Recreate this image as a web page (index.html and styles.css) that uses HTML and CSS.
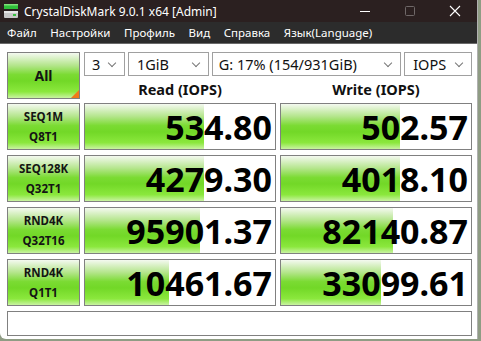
FILE: index.html
```html
<!DOCTYPE html>
<html lang="ru">
<head>
    <meta charset="UTF-8">
    <title>CrystalDiskMark 9.0.1 x64 [Admin]</title>
    <link rel="stylesheet" href="styles.css">
</head>
<body>
    <div class="window">
        <div class="titlebar">
            <svg class="app-icon" width="16" height="16" viewBox="0 0 16 16">
                <rect x="1" y="1" width="14" height="5" fill="#2fbf3a"/>
                <rect x="1" y="1" width="14" height="1.5" fill="#7fe07a"/>
                <rect x="1" y="8" width="14" height="7" rx="1" fill="#c8c8c8"/>
                <rect x="1" y="8" width="14" height="2" fill="#e6e6e6"/>
                <rect x="10" y="11" width="3" height="2" fill="#38c040"/>
            </svg>
            <span class="title">CrystalDiskMark 9.0.1 x64 [Admin]</span>
            <div class="controls">
                <span class="ctl"><svg width="12" height="12" viewBox="0 0 12 12"><path d="M1 6.5h10" stroke="#fff" stroke-width="1"/></svg></span>
                <span class="ctl"><svg width="12" height="12" viewBox="0 0 12 12"><rect x="1.5" y="1.5" width="9" height="9" rx="1" fill="none" stroke="#6f6868" stroke-width="1"/></svg></span>
                <span class="ctl"><svg width="12" height="12" viewBox="0 0 12 12"><path d="M1 1L11 11M11 1L1 11" stroke="#fff" stroke-width="1.1"/></svg></span>
            </div>
        </div>
        <div class="menubar">
            <span>Файл</span>
            <span>Настройки</span>
            <span>Профиль</span>
            <span>Вид</span>
            <span>Справка</span>
            <span>Язык(Language)</span>
        </div>
        <div class="content">
            <div class="grid">
                <div class="btn all">All<span class="corner"></span></div>
                <div class="top">
                    <div class="selects">
                        <div class="select s-count">3<span class="chev"></span></div>
                        <div class="select s-size">1GiB<span class="chev"></span></div>
                        <div class="select s-drive">G: 17% (154/931GiB)<span class="chev"></span></div>
                        <div class="select s-unit">IOPS<span class="chev"></span></div>
                    </div>
                    <div class="heads">
                        <div class="head">Read (IOPS)</div>
                        <div class="head">Write (IOPS)</div>
                    </div>
                </div>

                <div class="btn label">SEQ1M<br>Q8T1</div>
                <div class="value"><div class="bar" style="width: 119px"></div><span>534.80</span></div>
                <div class="value"><div class="bar" style="width: 119px"></div><span>502.57</span></div>

                <div class="btn label">SEQ128K<br>Q32T1</div>
                <div class="value"><div class="bar" style="width: 119px"></div><span>4279.30</span></div>
                <div class="value"><div class="bar" style="width: 119px"></div><span>4018.10</span></div>

                <div class="btn label">RND4K<br>Q32T16</div>
                <div class="value"><div class="bar" style="width: 115px"></div><span>95901.37</span></div>
                <div class="value"><div class="bar" style="width: 112px"></div><span>82140.87</span></div>

                <div class="btn label">RND4K<br>Q1T1</div>
                <div class="value"><div class="bar" style="width: 84px"></div><span>10461.67</span></div>
                <div class="value"><div class="bar" style="width: 100px"></div><span>33099.61</span></div>

                <div class="status"></div>
            </div>
        </div>
    </div>
</body>
</html>
```

FILE: styles.css
```css
body {
    margin: 0;
    background-color: #8f9c84;
    font-family: "Noto Sans", "Open Sans", sans-serif;
}
.window {
    width: 477px;
    height: 339px;
    background-color: #fff;
    border-right: 1px solid #b0b0b0;
    border-bottom-left-radius: 6px;
    overflow: hidden;
}
.titlebar {
    height: 22px;
    background-color: #2b2020;
    display: flex;
    align-items: center;
    color: #fff;
}
.app-icon {
    margin-left: 3px;
    margin-right: 5px;
}
.title {
    font-size: 12px;
}
.controls {
    margin-left: auto;
    display: flex;
}
.ctl {
    width: 45px;
    display: flex;
    justify-content: center;
    align-items: center;
    height: 22px;
}
.menubar {
    height: 21px;
    background-color: #2c2c2c;
    border-bottom: 1px solid #6a6a6a;
    display: flex;
    align-items: center;
    padding-left: 7px;
    gap: 13.6px;
    color: #fff;
    font-size: 11.5px;
}
.content {
    padding: 8px 0 0 7px;
}
.grid {
    display: grid;
    grid-template-columns: 73px 192px 192px;
    grid-template-rows: 46px repeat(4, 47px) 25px;
    column-gap: 4px;
    row-gap: 5px;
    width: 465px;
}
.btn {
    box-sizing: border-box;
    border: 1px solid #808080;
    background: linear-gradient(#f4f9f0 0%, #b3e58a 28%, #7bdb33 48%, #72d827 62%, #8be83d 86%, #c9f3a2 100%);
    display: flex;
    align-items: center;
    justify-content: center;
    text-align: center;
    font-weight: bold;
    color: #141414;
}
.all {
    position: relative;
    font-size: 14px;
    height: 47px;
}
.corner {
    position: absolute;
    right: 0;
    bottom: 0;
    width: 0;
    height: 0;
    border-left: 8px solid transparent;
    border-bottom: 8px solid #f07a1a;
}
.label {
    font-size: 11.5px;
    line-height: 20px;
}
.top {
    grid-column: 2 / 4;
    display: flex;
    flex-direction: column;
}
.selects {
    display: flex;
    gap: 3px;
    height: 24px;
}
.select {
    position: relative;
    box-sizing: border-box;
    height: 24px;
    border: 1px solid #a0a0a0;
    font-size: 14.5px;
    line-height: 22px;
    padding-left: 7px;
    color: #111;
}
.s-count { width: 41px; }
.s-size { width: 81px; padding-left: 8px; }
.s-drive { width: 190px; padding-left: 6px; }
.s-unit { width: 68px; padding-left: 8px; }
.chev {
    position: absolute;
    right: 9px;
    top: 7px;
    width: 5px;
    height: 5px;
    border-right: 1px solid #777;
    border-bottom: 1px solid #777;
    transform: rotate(45deg);
}
.heads {
    display: flex;
    gap: 4px;
    margin-top: 3px;
}
.head {
    width: 192px;
    text-align: center;
    font-weight: bold;
    font-size: 14.5px;
    color: #111;
}
.value {
    position: relative;
    box-sizing: border-box;
    border: 1px solid #808080;
    background-color: #fff;
    display: flex;
    align-items: center;
    justify-content: flex-end;
    padding-right: 3px;
    overflow: hidden;
}
.bar {
    position: absolute;
    left: 0;
    top: 0;
    bottom: 0;
    background: linear-gradient(#f4f9f0 0%, #b3e58a 28%, #7bdb33 48%, #72d827 62%, #8be83d 86%, #c9f3a2 100%);
}
.value span {
    position: relative;
    font-weight: bold;
    font-size: 34px;
    color: #000;
}
.status {
    grid-column: 1 / 4;
    box-sizing: border-box;
    border: 1px solid #808080;
}
```
